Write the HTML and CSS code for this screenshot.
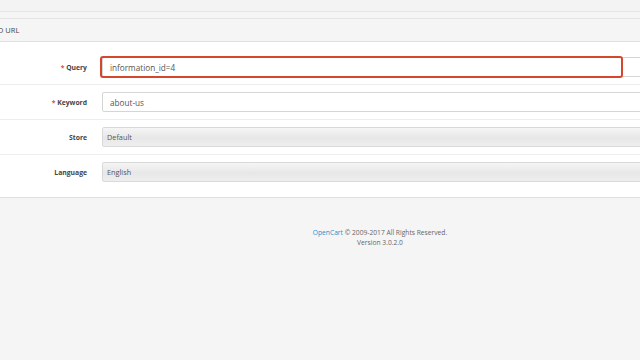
FILE: index.html
```html
<!DOCTYPE html>
<html lang="en">
<head>
    <meta charset="UTF-8">
    <meta name="viewport" content="width=device-width, initial-scale=1.0">
    <title>SEO URL</title>
    <link rel="stylesheet" href="styles.css">
</head>
<body>
    <div class="top-strip"></div>
    <div class="panel">
        <div class="panel-heading">Edit SEO URL</div>
        <div class="panel-body">
            <div class="form-group">
                <label class="control-label required" for="query">Query</label>
                <div class="field">
                    <input type="text" id="query" value="information_id=4">
                    <span class="highlight"></span>
                </div>
            </div>
            <div class="form-group">
                <label class="control-label required" for="keyword">Keyword</label>
                <div class="field">
                    <input type="text" id="keyword" value="about-us">
                </div>
            </div>
            <div class="form-group">
                <label class="control-label" for="store">Store</label>
                <div class="field">
                    <div class="select" id="store">Default</div>
                </div>
            </div>
            <div class="form-group">
                <label class="control-label" for="language">Language</label>
                <div class="field">
                    <div class="select" id="language">English</div>
                </div>
            </div>
        </div>
    </div>
    <footer class="footer">
        <a href="#">OpenCart</a> &copy; 2009-2017 All Rights Reserved.<br>
        Version 3.0.2.0
    </footer>
</body>
</html>
```

FILE: styles.css
```css
body {
    margin: 0;
    font-family: "Open Sans", Arial, sans-serif;
    background-color: #f5f5f5;
    color: #666;
    width: 640px;
    height: 360px;
    overflow: hidden;
}
.top-strip {
    height: 11px;
    background-color: #f3f3f3;
    border-bottom: 1px solid #e6e6e6;
    margin-bottom: 6px;
}
.panel {
    background: #fff;
    border-top: 1px solid #e3e3e3;
    border-bottom: 1px solid #e0e0e0;
}
.panel-heading {
    height: 22px;
    line-height: 22px;
    background-color: #f5f5f5;
    border-bottom: 1px solid #e0e0e0;
    font-size: 7.5px;
    color: #444;
    margin-left: -26px;
    white-space: nowrap;
}
.panel-body {
    padding: 8px 0;
}
.form-group {
    display: flex;
    align-items: center;
    padding: 7px 0;
    border-top: 1px solid #ededed;
}
.form-group:first-child {
    border-top: none;
}
.control-label {
    width: 87px;
    text-align: right;
    font-size: 6.8px;
    font-weight: bold;
    color: #444;
    flex-shrink: 0;
}
.required::before {
    content: "* ";
    color: #d9534f;
}
.field {
    position: relative;
    margin-left: 15px;
    flex: 1;
    margin-right: -40px;
}
input, .select {
    display: block;
    box-sizing: border-box;
    width: 100%;
    height: 20px;
    padding: 0 7px;
    font-family: "Open Sans", Arial, sans-serif;
    font-size: 8.2px;
    color: #555;
    border: 1px solid #d5d5d5;
    border-radius: 2px;
    background: #fff;
    outline: none;
}
.select {
    line-height: 18px;
    padding: 0 4px;
    font-size: 7.3px;
    background: linear-gradient(#f5f5f5, #e7e7e7 55%, #efefef);
    border-color: #d9d9d9;
}
.highlight {
    position: absolute;
    left: -2px;
    top: -1px;
    width: 523px;
    height: 22px;
    box-sizing: border-box;
    border: 2px solid #d4472c;
    border-radius: 3px;
}
.footer {
    padding: 30px 0 0 120px;
    text-align: center;
    font-size: 6.7px;
    line-height: 9.5px;
    color: #666;
}
.footer a {
    color: #1e91cf;
    text-decoration: none;
}
```
